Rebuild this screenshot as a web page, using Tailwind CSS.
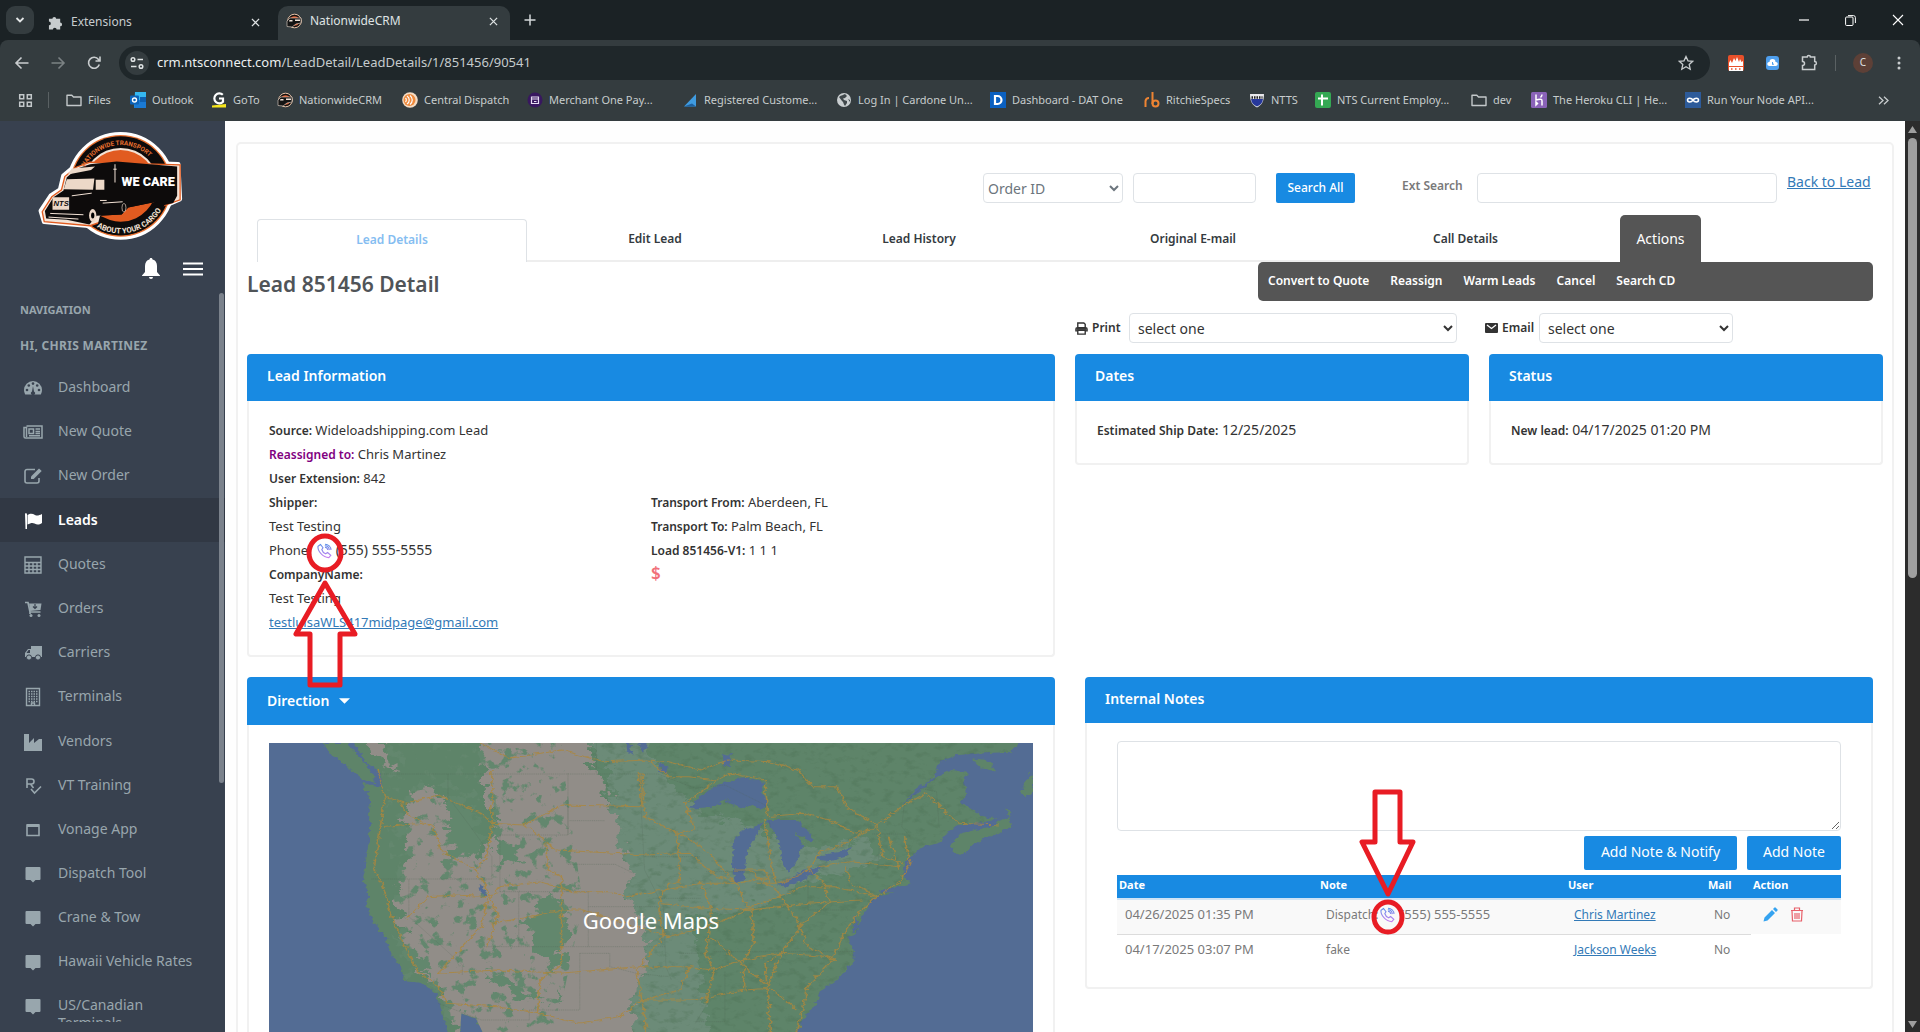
<!DOCTYPE html>
<html lang="en">
<head>
<meta charset="utf-8">
<title>NationwideCRM</title>
<script src="https://cdn.jsdelivr.net/npm/@tailwindcss/browser@4"></script>
</head>
<body class="h-screen overflow-hidden flex flex-col bg-white font-['Noto_Sans','Open_Sans',sans-serif] text-[#333]">

<svg class="absolute h-0 w-0" aria-hidden="true">
  <defs>
    <linearGradient id="callGrad" x1="0" y1="0" x2="0" y2="1"><stop offset="0" stop-color="#5b8fe8"/><stop offset="1" stop-color="#c77df0"/></linearGradient>
    <symbol id="call" viewBox="0 0 16 16"><path d="M4.500 1.500 2 3.200C1.300 8 7 14.600 12.800 14.600l2-2.200-3.200-2.900-2 1.300C7.600 9.900 6.200 8 5.800 6.500l1.200-1.800zM9 4.200c1.500.2 2.600 1.200 2.800 2.800M8.800 2.800c2.500.1 4.300 1.900 4.500 4.300M9 1.200c3.300.1 5.800 2.500 6 5.800" fill="none" stroke="url(#callGrad)" stroke-width="1.100"/></symbol>
    <symbol id="truck" viewBox="0 0 16 16"><circle cx="8.500" cy="8" r="6.800" fill="#111" stroke="#e9c3a8"/><circle cx="8.500" cy="8" r="4.800" fill="#d9582a"/><path d="M1 12V8l3-3h11v5l-5 1-4 3-5-.500z" fill="#141414" stroke="#e8d8cc" stroke-width=".6"/><path d="M3.500 7h3v1.500H3zM9 6.500h5v1.500H9z" fill="#f1e4da"/></symbol>
    <symbol id="folder" viewBox="0 0 16 16"><path d="M1 3.200h4.800l1.700 1.800H15v8.500H1z" fill="none" stroke="#c3c8ca" stroke-width="1.400" stroke-linejoin="round"/></symbol>
    <symbol id="msg" viewBox="0 0 20 20"><path d="M3.500 3h13a1 1 0 0 1 1 1v11a1 1 0 0 1-1 1h-4L10 18.500 7.500 16h-4a1 1 0 0 1-1-1V4a1 1 0 0 1 1-1z" fill="currentColor"/></symbol>
    <symbol id="x" viewBox="0 0 10 10"><path d="M1 1l8 8M9 1 1 9" stroke="currentColor" stroke-width="1.400"/></symbol>
  </defs>
</svg>

<!-- browser window chrome -->
<header class="shrink-0 bg-[#1b2225] text-[#dfe3e4] text-xs">
  <div class="flex h-10 items-end">
    <button aria-label="Search tabs" class="ml-[6px] mb-[6px] grid h-7 w-7 place-items-center rounded-[9px] bg-[#343c3f]"><svg class="h-2 w-2.5" viewBox="0 0 10 8"><path d="M1.500 2 5 5.500 8.500 2" fill="none" stroke="#e3e6e7" stroke-width="1.800"/></svg></button>
    <div class="ml-[14px] flex h-[34px] w-[230px] items-center pb-[6px] pt-1">
      <svg class="h-[15px] w-[15px]" viewBox="0 0 16 16"><path d="M1 4h3.700a2 2 0 1 1 4 0H13v4a2 2 0 1 1 0 4v3.500H9.200a2 2 0 1 0-4 0H1V11a2 2 0 0 0 0-4z" fill="#c7ccce"/></svg>
      <span class="ml-2 text-[#c7ccce]">Extensions</span>
      <button aria-label="Close" class="ml-auto mr-[18px]"><svg class="h-[9px] w-[9px]"><use href="#x"/></svg></button>
    </div>
    <div class="flex h-[34px] w-[232px] items-center rounded-t-[10px] bg-[#343c3f] px-2 pb-1">
      <svg class="h-4 w-4"><use href="#truck"/></svg>
      <span class="ml-2">NationwideCRM</span>
      <button aria-label="Close" class="ml-auto mr-[4px]"><svg class="h-[9px] w-[9px]"><use href="#x"/></svg></button>
    </div>
    <button aria-label="New tab" class="mb-[14px] ml-[14px]"><svg class="h-3 w-3" viewBox="0 0 12 12"><path d="M6 .5v11M.5 6h11" stroke="#d5d9da" stroke-width="1.500"/></svg></button>
    <div class="mb-[14px] ml-auto mr-[16px] flex items-center gap-[36px]">
      <svg class="h-[10px] w-[10px]" viewBox="0 0 10 10"><path d="M0 5h10" stroke="#fff" stroke-width="1.200"/></svg>
      <svg class="h-[11px] w-[11px]" viewBox="0 0 11 11"><path d="M.6 3a1 1 0 0 1 1-1H7a1 1 0 0 1 1 1v6.500a1 1 0 0 1-1 1H1.600a1 1 0 0 1-1-1zM3 .6h5.500a2 2 0 0 1 1.900 2V8" fill="none" stroke="#fff"/></svg>
      <svg class="h-[12px] w-[12px]" viewBox="0 0 12 12"><path d="M1 1l10 10M11 1 1 11" stroke="#fff" stroke-width="1.100"/></svg>
    </div>
  </div>
  <div class="flex h-[45px] items-center rounded-t-[8px] bg-[#343c3f] pl-[14px] pr-[19px]">
    <svg class="h-4 w-4" viewBox="0 0 16 16"><path d="M14.500 8H2M7.500 2.500 2 8l5.500 5.500" fill="none" stroke="#c9cdcf" stroke-width="1.600"/></svg>
    <svg class="ml-5 h-4 w-4" viewBox="0 0 16 16"><path d="M1.500 8H14M8.500 2.500 14 8l-5.500 5.500" fill="none" stroke="#7b8284" stroke-width="1.600"/></svg>
    <svg class="ml-5 h-4 w-4" viewBox="0 0 16 16"><path d="M13.300 9.500A5.500 5.500 0 1 1 12.500 4.500L14 6M14 1.500V6H9.500" fill="none" stroke="#c9cdcf" stroke-width="1.600"/></svg>
    <div class="ml-[17px] flex h-[34px] flex-1 items-center rounded-full bg-[#1f272a] pl-[6px] pr-4">
      <span class="grid h-6 w-6 place-items-center rounded-full bg-[#343c3f]"><svg class="h-[14px] w-[14px]" viewBox="0 0 14 14"><g fill="none" stroke="#dfe3e4" stroke-width="1.500"><circle cx="3" cy="3.500" r="1.800"/><path d="M7.500 3.500H13M1 10.500h5.500"/><circle cx="11" cy="10.500" r="1.800"/></g></svg></span>
      <span class="ml-[8px] text-[13px] text-[#c5cbcd]"><span class="text-[#eceff0]">crm.ntsconnect.com</span>/LeadDetail/LeadDetails/1/851456/90541</span>
      <svg class="ml-auto h-4 w-4" viewBox="0 0 16 16"><path d="m8 1.500 2 4.300 4.700.5-3.500 3.200 1 4.700L8 11.800l-4.200 2.400 1-4.700L1.300 6.300 6 5.800z" fill="none" stroke="#c9cdcf" stroke-width="1.300"/></svg>
    </div>
    <svg class="ml-[18px] h-4 w-4" viewBox="0 0 16 16"><rect width="16" height="16" rx="2" fill="#e8502a"/><path d="M1 11V8l1.500-3L4 8l2-5 1.500 3L9 2l2 5 1-3 1.500 3 1.500-1v5zM1 12h14v4H1z" fill="#fff"/><path d="M3 14h1.500M7 14h1.500M11 14h1.500" stroke="#e8502a" stroke-width="1.500"/></svg>
    <svg class="ml-[22px] h-[14px] w-[13px]" viewBox="0 0 13 14"><rect width="13" height="14" rx="3" fill="#4e9fee"/><path d="M3 10a2 2 0 0 1 .5-4 3 3 0 0 1 6 0 2 2 0 0 1 .5 4z" fill="#fff"/><path d="M6.500 6v2.500L8 8" stroke="#4e9fee" fill="none"/></svg>
    <svg class="ml-[22px] h-[17px] w-[17px]" viewBox="0 0 17 17"><path d="M1.500 3h4.700a1.600 1.600 0 0 1 3.200 0h4.300v4.500a1.700 1.700 0 0 1 0 3.400V15.500H1.500v-4a2 2 0 0 0 0-4z" fill="none" stroke="#c9cdcf" stroke-width="1.500"/></svg>
    <span class="ml-[17px] h-4 w-px bg-[#5a6163]"></span>
    <span class="ml-[17px] grid h-5 w-5 place-items-center rounded-full bg-[#5d4037] text-[10px]">C</span>
    <svg class="ml-[24px] h-[14px] w-1" viewBox="0 0 4 14" fill="#c9cdcf"><circle cx="2" cy="2" r="1.500"/><circle cx="2" cy="7" r="1.500"/><circle cx="2" cy="12" r="1.500"/></svg>
  </div>
  <nav aria-label="Bookmarks" class="flex h-9 items-center bg-[#343c3f] pl-[18px] pb-1.5 text-[11px] whitespace-nowrap text-[#c7cccd] [&_svg]:shrink-0 [&_a]:flex [&_a]:shrink-0 [&_a]:items-center [&_a]:gap-[6px]">
    <svg class="h-[15px] w-[15px]" viewBox="0 0 15 15"><path d="M1.700 1.700h4v4h-4zM9.300 1.700h4v4h-4zM1.700 9.300h4v4h-4zM9.300 9.300h4v4h-4z" fill="none" stroke="#c3c8ca" stroke-width="1.500"/></svg>
    <span class="ml-[15px] mr-[17px] h-4 w-px bg-[#5a6163]"></span>
    <a href="#" class="w-[64px]"><svg class="h-4 w-4"><use href="#folder"/></svg>Files</a>
    <a href="#" class="w-[81px]"><svg class="h-4 w-4" viewBox="0 0 16 16"><path d="M5 0h11v16H4z" fill="#35b8f1"/><path d="M5 8h11v8H4z" fill="#1a7ad4"/><path d="M10 5h6v5h-6z" fill="#0f5fb0"/><rect y="3.500" width="9" height="9" rx="1" fill="#0d63b8"/><circle cx="4.500" cy="8" r="2" fill="none" stroke="#fff" stroke-width="1.400"/></svg>Outlook</a>
    <a href="#" class="w-[66px]"><svg class="h-4 w-4" viewBox="0 0 16 16"><path d="M1 13.500 15 12v3.500H1z" fill="#f6e51c"/><path d="M11.800 2.800A5 5 0 1 0 12 9.800V6.500H8" fill="none" stroke="#fff" stroke-width="2.200"/></svg>GoTo</a>
    <a href="#" class="w-[125px]"><svg class="h-4 w-4"><use href="#truck"/></svg>NationwideCRM</a>
    <a href="#" class="w-[125px]"><svg class="h-4 w-4" viewBox="0 0 16 16"><circle cx="8" cy="8" r="7.800" fill="#f4dcc4"/><circle cx="7.500" cy="8" r="6" fill="#ef8a3c"/><path d="M5 4c3 2 3 6 0 8M8 3.500c3 2.500 3 6.500 0 9M3.500 6c1 1 1 3 0 4" fill="none" stroke="#fff" stroke-width="1.200"/></svg>Central Dispatch</a>
    <a href="#" class="w-[155px]"><svg class="h-4 w-4" viewBox="0 0 16 16"><circle cx="8" cy="8" r="7.500" fill="#38175f"/><path d="M4.500 5h7v6.500h-7zM4.500 7h7M7 9.500h2.500" fill="none" stroke="#e5dcf3" stroke-width="1.200"/></svg>Merchant One Pay...</a>
    <a href="#" class="w-[154px]"><svg class="h-4 w-4" viewBox="0 0 16 16"><path d="M2 14.500 14 2v12.500z" fill="#3f9be0"/><path d="m2 14.500 8-3 4 3z" fill="#1e5f9c"/></svg>Registered Custome...</a>
    <a href="#" class="w-[154px]"><svg class="h-4 w-4" viewBox="0 0 16 16"><circle cx="8" cy="8" r="7" fill="#c9ced0"/><path d="M3 5c2-2 5-2 6-3l2 2-2 2-2 .5L8 8l3 1v2l-2 3c-2-2-1-4-3-5zM12 7l2 1v2z" fill="#40484b"/></svg>Log In | Cardone Un...</a>
    <a href="#" class="w-[154px]"><svg class="h-4 w-4" viewBox="0 0 16 16"><path d="M0 0h16v16H0z" fill="#0b60c0"/><path d="M5 4v8h2.500a4 4 0 0 0 0-8z" fill="none" stroke="#fff" stroke-width="2.200"/></svg>Dashboard - DAT One</a>
    <a href="#" class="w-[105px]"><svg class="h-4 w-4" viewBox="0 0 16 16"><path d="M1.500 15V9a3.500 3.500 0 0 1 3.500-3M8.500 0v12" fill="none" stroke="#ee8433" stroke-width="2"/><circle cx="11.500" cy="11.500" r="3" fill="none" stroke="#ee8433" stroke-width="2"/></svg>RitchieSpecs</a>
    <a href="#" class="w-[66px]"><svg class="h-4 w-4" viewBox="0 0 16 16"><path d="M1 2h14c0 7-2 11-7 13.500C3 13 1 9 1 2z" fill="#e8e8ec"/><path d="M2 7h12c-.5 4-2.500 6-6 7.500C4.500 13 2.500 11 2 7z" fill="#27389b"/><path d="M2.500 5.500h11" stroke="#222" stroke-width="2.500" stroke-dasharray="1.500 1"/></svg>NTTS</a>
    <a href="#" class="w-[156px]"><svg class="h-4 w-4" viewBox="0 0 16 16"><rect width="16" height="16" rx="2" fill="#34a853"/><path d="M7 2.500v11M3 6.500h10" stroke="#fff" stroke-width="2"/></svg>NTS Current Employ...</a>
    <a href="#" class="w-[60px]"><svg class="h-4 w-4"><use href="#folder"/></svg>dev</a>
    <a href="#" class="w-[154px]"><svg class="h-4 w-4" viewBox="0 0 16 16"><rect width="16" height="16" rx="1.500" fill="#8a63b8"/><path d="M5 2.500V8c6-2 6 0 6 1v4.500M11 2.500c0 1-.5 2-1.500 3M5 10v3l1.500-1.500z" fill="none" stroke="#fff" stroke-width="1.500"/></svg>The Heroku CLI | He...</a>
    <a href="#"><svg class="h-4 w-4" viewBox="0 0 16 16"><path d="M0 0h16v16H0z" fill="#2d5b9a"/><path d="M8 8C6.500 5.500 2.500 5.500 2.500 8S6.500 10.500 8 8s5.500-2.500 5.500 0S9.500 10.500 8 8z" fill="none" stroke="#fff" stroke-width="1.500"/></svg>Run Your Node API...</a>
    <svg class="ml-auto mr-[31px] h-[9px] w-[11px]" viewBox="0 0 11 9"><path d="m1 .8 4 3.700-4 3.700M6 .8l4 3.700-4 3.700" fill="none" stroke="#c9cdcf" stroke-width="1.300"/></svg>
  </nav>
</header>

<div class="flex min-h-0 flex-1">
  <!-- sidebar -->
  <aside class="relative flex w-[225px] shrink-0 flex-col bg-[#38414f] pb-[10px] text-[#98a6ad]">
    <svg class="ml-[38px] mt-[10px] h-[110px] w-[146px] shrink-0" viewBox="114 45 438 331" role="img" aria-label="Nationwide Transport - We care about your cargo">
      <defs><path id="arcTop" d="M254 153A122 122 0 0 1 471 154"/><path id="arcBot" d="M290 334A143 143 0 0 0 500 245"/></defs>
      <g stroke="#fff" stroke-width="14" stroke-linejoin="round" fill="#fff"><circle cx="362" cy="210" r="155"/><path d="M122 285 152 240 180 222 190 180 225 150 270 136 535 145 540 250 490 272 390 290 265 330 132 318z"/></g>
      <circle cx="362" cy="210" r="153" fill="#e8702f"/><circle cx="362" cy="210" r="149" fill="#0d0b0b"/>
      <circle cx="362" cy="210" r="114" fill="#f3e3d6"/><circle cx="362" cy="210" r="108" fill="#e15b20"/>
      <path d="M126 288 155 243 184 222 194 182 228 154 270 139 541 147 541 252 490 270 400 285 270 330 132 318z" fill="#f3e3d6" stroke="#e15b20" stroke-width="4"/>
      <path d="M362 264 L500 240 L494 268A143 143 0 0 1 290 340L300 300z" fill="#0d0b0b"/><path d="M300 300 365 296 385 275 468 258 462 250A108 108 0 0 1 330 313z" fill="#e15b20"/>
      <path d="M134 286 160 244 190 224 200 184 232 158 270 145 350 137 532 152 532 240 520 262 485 270 470 258 385 275 365 296 290 300 268 326 200 312 138 308z" fill="#0d0b0b"/>
      <path d="m200 190 83-2-4 34-88-2zM287 192h26v30h-26zM157 244h50v38h-50zM215 158l70-6-12 10-70 14z" fill="#ecd8c8"/>
      <path d="M345 145v55M340 160h10M150 293l100 4M215 240l60-8M145 304l90 6M300 254h20M308 262l60-4" stroke="#f3e3d6" stroke-width="3" fill="none"/>
      <ellipse cx="278" cy="299" rx="11" ry="19" fill="#ecd8c8"/><ellipse cx="278" cy="299" rx="5" ry="9"/><ellipse cx="372" cy="276" rx="6" ry="13" fill="none" stroke="#ecd8c8" stroke-width="2"/>
      <text x="160" y="272" font-size="23" font-weight="800" font-style="italic" fill="#0d0b0b" font-family="'Liberation Sans',sans-serif">NTS</text>
      <g font-family="Roboto,sans-serif" font-weight="700">
        <text font-size="19" fill="#e8702f"><textPath href="#arcTop">NATIONWIDE TRANSPORT</textPath></text>
        <text font-size="23" fill="#f3e3d6"><textPath href="#arcBot">ABOUT YOUR CARGO</textPath></text>
        <text x="445" y="212" text-anchor="middle" font-size="38" font-weight="900" fill="#fff">WE CARE</text>
      </g>
    </svg>
    <div class="mt-[17px] flex items-center justify-end gap-[23px] pr-[22px] text-white">
      <svg class="h-[21px] w-[18px]" viewBox="0 0 18 21" fill="currentColor"><path d="M9 0c1 0 1.500.7 1.500 1.600C13.500 2.300 15 5 15 8v6l3 3.500v.5H0v-.5L3 14V8c0-3 1.500-5.700 4.500-6.400C7.500.7 8 0 9 0zM7 19h4a2 2 0 0 1-4 0z"/></svg>
      <svg class="h-[14px] w-5" viewBox="0 0 20 14"><path d="M0 1.500h20M0 7h20M0 12.500h20" stroke="currentColor" stroke-width="2"/></svg>
    </div>
    <p class="mt-[21px] pl-5 text-[11px] leading-[20px] font-bold">NAVIGATION</p>
    <p class="mt-4 pl-5 text-xs leading-[20px] font-bold tracking-wide">HI, CHRIS MARTINEZ</p>
    <nav class="mt-[9px] min-h-0 flex-1 overflow-hidden text-sm [&_a]:flex [&_a]:min-h-11 [&_a]:gap-[15px] [&_a]:pl-[23px] [&_a]:pt-[13px] [&_a]:pr-6 [&_a]:leading-[18px] [&_svg]:h-5 [&_svg]:w-5 [&_svg]:shrink-0">
      <a href="#"><svg viewBox="0 0 20 20"><path d="M2.200 16.500A9.300 9.300 0 0 1 1 12a9 9 0 0 1 18 0c0 1.600-.4 3.200-1.200 4.500z" fill="currentColor"/><g fill="#38414f"><circle cx="4" cy="12" r="1.300"/><circle cx="5.800" cy="7.500" r="1.300"/><circle cx="10" cy="5.600" r="1.300"/><circle cx="14.200" cy="7.500" r="1.300"/><circle cx="16" cy="12" r="1.300"/><path d="m10 8 1 5.500a2 2 0 1 1-2 0z"/></g></svg>Dashboard</a>
      <a href="#"><svg viewBox="0 0 20 20" fill="none" stroke="currentColor" stroke-width="1.500"><path d="M3.500 4H19v12H2.500Q1 16 1 14.500V5.500h2.500V15M6 7h4.500v4.500H6zM12.500 7H17M12.500 9.500H17M12.500 11.500H17M6 13.700h11"/></svg>New Quote</a>
      <a href="#"><svg viewBox="0 0 20 20" fill="none" stroke="currentColor" stroke-width="1.600"><path d="M12 3.500H4a2 2 0 0 0-2 2V15a2 2 0 0 0 2 2h10a2 2 0 0 0 2-2v-3"/><path d="m8 10.500 8-8L18.700 5l-8 8H8z" fill="currentColor" stroke="none"/></svg>New Order</a>
      <a href="#" class="mt-px bg-[#313844] font-semibold text-white"><svg viewBox="0 0 20 20" fill="currentColor"><path d="M2 2.500a1.200 1.200 0 0 1 2 1V18H2.500zM4.500 4c3-2 5-1.500 7.500 0 2 1 4 .5 7-1v9c-3 2-5 2-7.500.5-2-1-4-.5-7 1z"/></svg>Leads</a>
      <a href="#"><svg viewBox="0 0 20 20" fill="none" stroke="currentColor" stroke-width="1.400"><path d="M2 2h16v16H2zM2 7.500h16M2 11h16M2 14.500h16M6 7.500V18M10 7.500V18M14 7.500V18"/></svg>Quotes</a>
      <a href="#"><svg viewBox="0 0 20 20"><path d="M2 3.500h3l2 9.500h10.500M7 15v-2" fill="none" stroke="currentColor" stroke-width="1.700"/><path d="M6 4.500h12.500L17.500 11 7.200 12z" fill="currentColor"/><circle cx="8" cy="16.500" r="1.500" fill="currentColor"/><circle cx="16" cy="16.500" r="1.500" fill="currentColor"/><path d="M12 5v4M10 7.500l2 2 2-2" fill="none" stroke="#38414f" stroke-width="1.200"/></svg>Orders</a>
      <a href="#"><svg viewBox="0 0 20 20" fill="currentColor"><path d="M8 3h11v11H2V10l3-4h3z"/><circle cx="6" cy="14.500" r="2.600" stroke="#38414f"/><circle cx="15" cy="14.500" r="2.600" stroke="#38414f"/><path d="M5.500 7H7v3H3.500z" fill="#38414f"/></svg>Carriers</a>
      <a href="#"><svg viewBox="0 0 20 20" fill="none" stroke="currentColor" stroke-width="1.400"><path d="M3.500 1.500h13v17h-13z"/><path d="M5.500 4.500h9M5.500 7h9M5.500 9.500h9M5.500 12h9M5.500 14.500h9" stroke-dasharray="1.500 1"/><path d="M8.500 18v-2h3v2"/></svg>Terminals</a>
      <a href="#" class="mt-px"><svg viewBox="0 0 20 20" fill="currentColor"><path d="M1 2h5v9l5-5v5l5-4h3v12H1z"/></svg>Vendors</a>
      <a href="#"><svg viewBox="0 0 20 20" fill="none" stroke="currentColor" stroke-width="1.600"><path d="M4 12V3h4.500a2.500 2.500 0 0 1 0 5H4M7.500 8l3 4M8 13l3.500 4L18 10.500"/></svg>VT Training</a>
      <a href="#"><svg viewBox="0 0 20 20" fill="none" stroke="currentColor" stroke-width="1.600"><path d="M4 5h12v10.500H4z"/><path d="M4 5.500h12" stroke-width="3"/></svg>Vonage App</a>
      <a href="#"><svg><use href="#msg"/></svg>Dispatch Tool</a>
      <a href="#"><svg><use href="#msg"/></svg>Crane &amp; Tow</a>
      <a href="#"><svg><use href="#msg"/></svg>Hawaii Vehicle Rates</a>
      <a href="#"><svg><use href="#msg"/></svg>US/Canadian Terminals</a>
    </nav>
    <span class="absolute top-[172px] right-px h-[490px] w-[5px] rounded-full bg-[#7b828c]"></span>
  </aside>

  <main class="min-w-0 flex-1 overflow-hidden bg-[#fefefe] px-[11px] pt-[21px]">
    <div class="min-h-full rounded-[5px] border-2 border-[#f1f1f1] bg-white pl-[9px] pr-[9px] pt-[29px]">
      <!-- search row -->
      <form class="flex h-[30px] justify-end pr-[10px]">
        <select aria-label="Search field" class="w-[140px] rounded border border-[#dee2e6] bg-white text-[14px] text-[#6c757d]"><option>Order ID</option></select>
        <input aria-label="Search value" class="ml-[10px] w-[123px] rounded border border-[#dee2e6]">
        <button type="button" class="ml-5 w-[79px] rounded-[2px] bg-[#188ae2] text-xs font-medium text-white">Search All</button>
        <label for="ext" class="ml-[47px] w-[75px] pt-1 text-xs leading-[18px] font-semibold text-[#797979]">Ext Search</label>
        <input id="ext" class="w-[300px] rounded border border-[#dee2e6]">
        <a href="#" class="ml-[10px] w-[86px] text-sm leading-[18px] text-[#337ab7] underline">Back to Lead</a>
      </form>

      <!-- tabs -->
      <div class="mt-3 flex h-[47px] items-end pl-[10px] pr-[182px]">
        <nav class="grid h-[43px] flex-1 grid-cols-[270fr_256fr_272fr_276fr_269fr] text-center text-xs leading-[40px] font-semibold text-[#343a40] [&_a]:border-b-2 [&_a]:border-[#eee]">
          <a href="#" class="rounded-t border border-b-0! border-[#dee2e6]! text-[#85bdf1]">Lead Details</a>
          <a href="#">Edit Lead</a><a href="#">Lead History</a><a href="#">Original E-mail</a><a href="#">Call Details</a>
        </nav>
        <button class="ml-5 h-[47px] w-[81px] rounded-t-[5px] bg-[#555] text-sm text-white">Actions</button>
      </div>
      <div class="flex h-[39px] justify-between pr-[10px]">
        <h1 class="text-[21px] leading-[44px] font-semibold text-[#505458]">Lead 851456 Detail</h1>
        <div class="flex w-[615px] items-center gap-[21px] rounded-[5px] bg-[#555] pb-0.5 pl-[10px] text-xs font-semibold text-white">
          <a href="#">Convert to Quote</a><a href="#">Reassign</a><a href="#">Warm Leads</a><a href="#">Cancel</a><a href="#">Search CD</a>
        </div>
      </div>
      <div class="mt-3 flex h-[30px] items-center justify-end pr-[150px] text-xs font-semibold">
        <label for="print" class="flex w-[54px] items-center gap-1"><svg class="h-[13px] w-[13px]" viewBox="0 0 14 14"><path d="M3 6V1h6.500L11 2.500V6M3 9.500H1V7.500Q1 6 2.500 6h9Q13 6 13 7.500v2h-2M3 9h8v4H3z" fill="none" stroke="#333" stroke-width="1.500"/><path d="M1.500 6.500h11v2h-11z" fill="#333"/></svg>Print</label>
        <select id="print" class="h-[30px] w-[328px] rounded border border-[#dee2e6] bg-white pl-1 text-[14px] font-normal"><option>select one</option></select>
        <label for="email" class="ml-[28px] flex w-[54px] items-center gap-1"><svg class="h-[10px] w-[13px]" viewBox="0 0 13 10"><rect width="13" height="10" rx="1" fill="#333"/><path d="m2 2 4.500 3.500L11 2" fill="none" stroke="#fff" stroke-width="1.300"/></svg>Email</label>
        <select id="email" class="h-[30px] w-[194px] rounded border border-[#dee2e6] bg-white pl-1 text-[14px] font-normal"><option>select one</option></select>
      </div>

      <!-- summary cards -->
      <div class="mt-[11px] grid grid-cols-[808fr_394fr_394fr] items-start gap-5 text-[13px] leading-6 [&_b]:text-xs [&_b]:font-semibold [&_h2]:h-[47px] [&_h2]:rounded-t [&_h2]:bg-[#188ae2] [&_h2]:pl-5 [&_h2]:text-sm [&_h2]:leading-[44px] [&_h2]:font-semibold [&_h2]:text-white">
        <section>
          <h2>Lead Information</h2>
          <div class="rounded-b border-2 border-t-0 border-[#f1f1f1] px-5 pt-[17px] pb-[21px]">
            <p><b>Source:</b> Wideloadshipping.com Lead</p>
            <p><b class="text-[#800080]">Reassigned to:</b> Chris Martinez</p>
            <p><b>User Extension:</b> 842</p>
            <div class="grid grid-cols-2">
              <div>
                <p><b>Shipper:</b></p>
                <p>Test Testing</p>
                <p class="flex">Phone:<a href="#" aria-label="Call" class="relative mx-1 mt-[5px] h-4 w-4"><svg class="h-4 w-4"><use href="#call"/></svg>
                  <svg class="absolute -top-[12px] -left-[24px] h-[158px] w-[66px] max-w-none" viewBox="0 0 66 158" fill="none" stroke="#e81c24" stroke-width="5" stroke-linejoin="round"><ellipse cx="33" cy="22" rx="16" ry="17"/><path d="M33 52 4 103h14v51h30v-51h15z"/></svg></a><span class="text-sm leading-6">(555) 555-5555</span></p>
                <p><b>CompanyName:</b></p>
                <p>Test Testing</p>
                <p><a href="#" class="text-[#337ab7] underline">testluisaWLS417midpage@gmail.com</a></p>
              </div>
              <div>
                <p><b>Transport From:</b> Aberdeen, FL</p>
                <p><b>Transport To:</b> Palm Beach, FL</p>
                <p><b>Load 851456-V1:</b> 1 1 1</p>
                <p class="text-[17px] font-semibold text-[#f1707a]">$</p>
              </div>
            </div>
          </div>
        </section>
        <section>
          <h2>Dates</h2>
          <div class="rounded-b border-2 border-t-0 border-[#f1f1f1] px-5 pt-[17px] pb-[21px] text-sm leading-6"><b>Estimated Ship Date:</b> 12/25/2025</div>
        </section>
        <section>
          <h2>Status</h2>
          <div class="rounded-b border-2 border-t-0 border-[#f1f1f1] px-5 pt-[17px] pb-[21px] text-sm leading-6"><b>New lead:</b> 04/17/2025 01:20 PM</div>
        </section>
      </div>

      <div class="mt-5 grid grid-cols-[808fr_788fr] items-start gap-[30px] pr-[10px]">
        <section>
          <h2 class="flex h-12 items-center gap-[10px] rounded-t bg-[#188ae2] pl-5 text-sm font-semibold text-white">Direction <svg class="h-[6px] w-[11px]" viewBox="0 0 10 5"><path d="M0 0h10L5 5z" fill="#fff"/></svg></h2>
          <div class="border-2 border-t-0 border-[#f1f1f1] px-5 pt-[18px]">
            <div class="relative h-[400px] overflow-hidden bg-[#536c94]">
              <svg class="absolute inset-0 h-full w-full" viewBox="54 219 1426 1200" preserveAspectRatio="none" color-interpolation-filters="sRGB">
                <defs>
                  <filter id="rough" x="-5%" y="-5%" width="110%" height="110%"><feTurbulence type="fractalNoise" baseFrequency="0.035" numOctaves="4" seed="4"/><feDisplacementMap in="SourceGraphic" scale="55" xChannelSelector="R" yChannelSelector="G"/></filter>
                  <filter id="coast" x="-5%" y="-5%" width="110%" height="110%"><feTurbulence type="fractalNoise" baseFrequency="0.080" numOctaves="3" seed="9"/><feDisplacementMap in="SourceGraphic" scale="14" xChannelSelector="R" yChannelSelector="G"/></filter>
                  <filter id="terrain" x="0" y="0" width="100%" height="100%"><feTurbulence type="fractalNoise" baseFrequency="0.045 0.030" numOctaves="5" seed="12"/><feColorMatrix values="0 0 0 0 .39  0 0 0 0 .53  0 0 0 0 .43  10 0 0 0 -5.800"/><feComposite in2="SourceGraphic" operator="in"/></filter>
                  <filter id="relief" x="0" y="0" width="100%" height="100%"><feTurbulence type="fractalNoise" baseFrequency="0.050" numOctaves="4" seed="21"/><feColorMatrix values="0 0 0 0 .31  0 0 0 0 .45  0 0 0 0 .34  4 0 0 0 -2.100"/><feComposite in2="SourceGraphic" operator="in"/></filter>
                  <path id="land" d="M205 200 235 275 262 310 268 350 245 348 228 338 240 380 243 440 242 500 235 570 228 625 240 665 236 710 250 760 270 800 285 860 300 890 306 930 340 940 365 970 372 1000 390 1100 410 1100 413 1030 440 1045 460 1110 480 1450H1060L1040 1086 1050 1050 1075 1000 1085 960 1115 930 1135 890 1148 870 1143 840 1135 800 1150 790 1160 740 1175 700 1190 682 1225 665 1205 668 1190 662 1215 655 1252 640 1237 610 1245 570 1270 535 1310 515 1315 490 1345 465 1375 460 1400 452 1368 420 1345 400 1357 368 1350 330 1362 310 1330 300 1300 320 1270 360 1235 405 1260 360 1295 320 1305 275 1340 255 1390 250 1440 245 1470 200z"/>
                  <clipPath id="landClip"><use href="#land"/></clipPath>
                </defs>
                <g filter="url(#coast)" fill="#5e8469">
                  <use href="#land"/>
                  <path d="M158 219 200 219 245 300 252 340 225 325 190 275 165 245zM1330 520 1345 490 1400 470 1445 430 1430 415 1440 470 1380 512 1345 557 1328 545zM1365 265 1395 270 1412 305 1385 295zM1365 430 1400 445 1420 440 1390 455zM1480 300 1465 340 1455 375 1480 375z"/>
                </g>
                <g clip-path="url(#landClip)">
                  <path filter="url(#rough)" d="M640 200 690 290 690 400 700 560 720 690 740 1450H880L870 1080 860 900 830 740 940 730 1060 640 1200 560 1180 500 1080 540 960 470 850 420 800 330 740 200z" fill="#6c8b78"/>
                  <path filter="url(#relief)" d="M640 200h800v400l-200 200-100 400H740z" fill="#fff" opacity=".4"/>
                  <path filter="url(#rough)" d="M450 200 655 200 655 290 680 350 690 420 705 500 715 560 730 640 715 690 745 730 762 810 755 900 735 960 710 1450 480 1450 400 1086 385 970 340 910 305 800 295 700 290 640 315 560 305 480 315 400 345 340 385 400 405 480 450 560 485 470 455 400 455 300z" fill="#918d88"/>
                  <path filter="url(#terrain)" d="M260 219H600L620 480 640 700 600 1000 560 1400 400 1200 300 900z" fill="#fff"/>
                  <path filter="url(#rough)" d="M575 660 600 690 610 760 600 880 585 900 560 850 540 760zM380 380 430 420 450 500 430 560 400 560 385 480zM480 500 510 520 520 570 500 590 480 550zM275 780 350 880 360 920 310 860zM460 910 520 950 560 990 520 980 480 950zM590 960 600 990 590 1010z" fill="#62876d"/>
                  <path filter="url(#rough)" d="M240 219 270 219 280 270 290 300 260 270zM320 350 340 370 335 440 320 470z" fill="#918d88"/>
                </g>
                <g filter="url(#coast)" fill="#536c94">
                  <path d="M840 417 855 385 880 355 910 335 940 322 975 335 975 365 985 400 975 420 955 405 935 415 905 395 915 385 880 410zM920 510 935 482 965 468 978 455 965 490 950 530 945 560 940 630 925 640 918 600zM985 450 1040 450 1070 500 1065 515 1035 485 1050 525 1040 570 1025 608 1015 590 1008 540 1003 500 990 475zM1005 645 1020 630 1050 600 1087 588 1080 605 1050 630 1020 652zM1075 568 1085 555 1120 545 1142 530 1130 560 1100 574zM445 642 455 650 462 682 450 670zM718 219h10l5 35-12-10zM745 219h14l-3 28-8-10zM903 255 916 252 914 290 900 285zM1148 735 1155 770 1143 790zM785 280 800 290 795 312 782 305z"/>
                </g>
                <g fill="none" stroke="#4f6253" stroke-width="1" stroke-dasharray="2 1.500" opacity=".7">
                  <path d="M262 312H780L850 355 905 345 980 405 990 470M245 627H470M315 627V740L415 885V915M388 312V380L430 470 470 560V627M485 495H612V410M612 310V495M665 219V310M485 665V495M485 665H650V830M455 830H795M520 830V665M634 850V1020H540V1050L450 1050 370 1000M634 850H690V890L740 910 800 920M615 452H680M612 583H700L735 610M650 710H780M755 560H860M745 312 755 600 790 710 795 890 805 930M770 685H860M870 605H940M1060 625V720H1145M820 850H870M885 845H1145M850 1055H905V905M1195 490 1190 600M1240 400 1235 470 1250 500M1180 492H1240M1240 400 1270 355 1300 365 1305 475M872 1000 850 1060"/>
                </g>
                <g fill="none" stroke="#ac873d" stroke-width="3" opacity=".8" filter="url(#coast)">
                  <path d="M258 300 270 380 262 470 250 600 265 640 290 770 330 900 370 950 385 1000M270 380 310 400 370 375 450 430 470 460 460 560 440 600 465 670 450 770 370 910M300 395 310 430 360 470 375 540 440 600M262 470 340 460 360 470M470 460 530 465 600 405 750 410 745 310M450 219 500 265 600 240 680 275 760 270 800 320M470 300V350L470 460M530 465 560 500 590 540 650 545 755 555 840 550 890 620 925 635M570 520 575 600 600 620 600 670M310 750 350 680 400 675 470 680M470 680 485 650 560 635 620 665 690 665 720 680 770 665 860 640 930 640 990 620M470 760 540 740 600 720 640 720 740 770 800 800 870 770 950 720M370 910 480 900 600 910 740 890 840 890 880 900 940 870 1010 850 1100 860M600 670 600 880 560 930 555 1030 630 1060 710 1040 750 990 850 990 940 960 990 955 1040 1020M385 1000 480 1010 555 1030M465 670 480 740 460 830"/>
                  <path d="M750 310 755 440 815 490 820 560 820 640 800 640 780 700 790 800 740 900 750 990 760 1086M760 270 800 275 860 300 910 270 990 275 1040 300 1070 350 1115 350 1130 410 1190 465 1235 410 1280 370 1340 460 1420 465M800 320 840 320 890 330 915 310 980 330 985 440 1050 430 1100 450 1150 490 1190 470M815 490 850 480 830 400 890 330M820 490 870 540 925 640 940 690 955 720 960 820 940 870 940 960M1190 465 1130 520 1080 550 1060 600 1010 640 960 640M1190 465 1200 560 1240 580M1240 500 1250 580 1235 630 1190 680 1160 720 1130 780 1105 870 1060 950 1040 1086M1190 680 1110 650 1050 650 990 690 940 720M1080 590 1140 575 1230 590M1060 600 1090 640 1100 700 1050 760 1010 850 985 950M950 600 1000 660 1040 750 1060 830 1110 870M860 640 880 720 870 850 885 900 870 1000M780 700 870 715 950 720 1060 700 1160 690M920 600 980 600 990 640M985 950 920 860 880 800M840 890 820 960 750 990M1010 850 980 880 990 1086M1190 680 1140 640 1130 590M1210 500 1230 600M980 450 990 570 1000 640"/>
                </g>
              </svg>
              <p class="absolute inset-x-0 top-[161px] text-center text-[22px] leading-[32px] text-white">Google Maps</p>
            </div>
          </div>
        </section>

        <section>
          <h2 class="h-[46px] rounded-t bg-[#188ae2] pl-5 text-sm leading-[43px] font-semibold text-white">Internal Notes</h2>
          <div class="rounded-b border-2 border-t-0 border-[#f1f1f1] px-[30px] pt-[18px] pb-[18px]">
            <textarea aria-label="Note" class="block h-[90px] w-full resize rounded border border-[#dee2e6] bg-white"></textarea>
            <div class="mt-[5px] flex h-[34px] justify-end gap-[10px] text-sm text-white">
              <button class="w-[153px] rounded-[2px] bg-[#188ae2] pb-0.5">Add Note &amp; Notify</button>
              <button class="w-[94px] rounded-[2px] bg-[#188ae2] pb-0.5">Add Note</button>
            </div>
            <table class="mt-[5px] w-full table-fixed text-left text-xs text-[#797979]">
              <colgroup><col class="w-[201px]"><col><col class="w-[140px]"><col class="w-[45px]"><col class="w-[90px]"></colgroup>
              <thead class="bg-[#188ae2] text-[11px] text-white"><tr class="h-[24px] border-b-2 border-[#cfe3f5] [&_th]:pb-0.5 [&_th]:pl-0.5 [&_th]:font-bold"><th>Date</th><th>Note</th><th>User</th><th>Mail</th><th>Action</th></tr></thead>
              <tbody class="[&_td]:pl-2 [&_td]:pb-1">
                <tr class="h-[35px] bg-[#f9f9f9] [&_td]:border-b [&_td]:border-[#dcdcdc]">
                  <td class="text-[13px]">04/26/2025 01:35 PM</td>
                  <td><div class="flex items-center">Dispatch:<a href="#" aria-label="Call" class="relative ml-[1px] mr-[5px] h-4 w-4"><svg class="h-4 w-4"><use href="#call"/></svg>
                    <svg class="absolute -top-[120px] -left-[21px] h-[152px] w-[60px] max-w-none" viewBox="0 0 60 152" fill="none" stroke="#e81c24" stroke-width="5" stroke-linejoin="round"><ellipse cx="30" cy="130" rx="14" ry="15"/><path d="M17 5h25v50h13L30 107 4 55h13z"/></svg></a><span class="text-[13px]">(555) 555-5555</span></div></td>
                  <td><a href="#" class="text-[#337ab7] underline">Chris Martinez</a></td><td>No</td>
                  <td class="border-transparent!"><div class="flex gap-3 pl-1">
                    <button aria-label="Edit"><svg class="h-[15px] w-[15px]" viewBox="0 0 15 15"><path d="m.5 14.500 1-4L9 3l3 3-7.500 7.500zM10 2l1.500-1.500q.5-.5 1 0L14.500 2.500q.5.5 0 1L13 5z" fill="#35a3f0"/></svg></button>
                    <button aria-label="Delete"><svg class="h-[15px] w-[14px]" viewBox="0 0 14 15"><path d="M1 3.500h12M4.500 3V1h5v2M2 4l.5 10h9L12 4M5 6v6M7 6v6M9 6v6" fill="none" stroke="#e8606a" stroke-width="1.200"/></svg></button></div></td>
                </tr>
                <tr class="h-[35px]"><td class="text-[13px]">04/17/2025 03:07 PM</td><td>fake</td><td><a href="#" class="text-[#337ab7] underline">Jackson Weeks</a></td><td>No</td><td></td></tr>
              </tbody>
            </table>
          </div>
        </section>
      </div>
    </div>
  </main>

  <div class="relative w-[15px] shrink-0 bg-[#2c2c2c]">
    <svg class="absolute top-[5px] left-[3px] h-[7px] w-[9px]" viewBox="0 0 9 7"><path d="M4.500 0 9 7H0z" fill="#9f9f9f"/></svg>
    <span class="absolute top-[17px] left-[3px] h-[440px] w-[9px] rounded-full bg-[#9f9f9f]"></span>
    <svg class="absolute bottom-[4px] left-[3px] h-[7px] w-[9px]" viewBox="0 0 9 7"><path d="M4.500 7 0 0h9z" fill="#9f9f9f"/></svg>
  </div>
</div>
</body>
</html>
